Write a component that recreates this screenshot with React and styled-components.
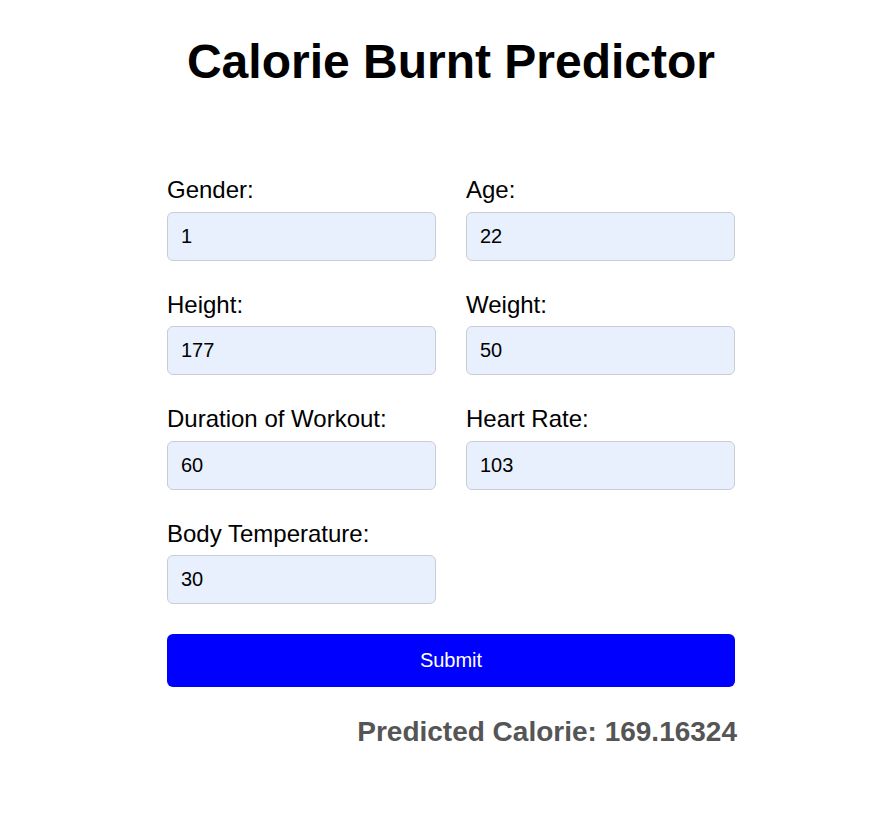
import React from 'react';
import styled, { createGlobalStyle } from 'styled-components';

const GlobalStyle = createGlobalStyle`
    body {
        margin: 0;
        background: #fff;
        font-family: "Liberation Sans", Arial, sans-serif;
        color: #000;
    }
`;

const Page = styled.div`
    width: 578px;
    margin: 0 auto;
    padding: 34px 0 40px 10px;
    box-sizing: border-box;
`;

const Title = styled.h1`
    margin: 0;
    text-align: center;
    font-size: 48px;
    font-weight: bold;
`;

const Form = styled.form`
    margin-top: 87px;
    display: grid;
    grid-template-columns: minmax(0, 1fr) minmax(0, 1fr);
    column-gap: 30px;
    row-gap: 30px;
`;

const Field = styled.div`
    display: flex;
    flex-direction: column;
    min-width: 0;
`;

const Label = styled.label`
    font-size: 24px;
    line-height: 28px;
    margin-bottom: 7.5px;
`;

const Input = styled.input`
    box-sizing: border-box;
    width: 100%;
    min-width: 0;
    height: 49px;
    padding: 0 13px;
    font-family: "Liberation Sans", Arial, sans-serif;
    font-size: 20px;
    color: #000;
    background: #e8f0fe;
    border: 1px solid #c9ccd4;
    border-radius: 6px;
    outline: none;
`;

const SubmitBtn = styled.button`
    grid-column: 1 / -1;
    height: 53px;
    background: #0000ff;
    color: #fff;
    border: none;
    border-radius: 6px;
    font-family: "Liberation Sans", Arial, sans-serif;
    font-size: 20px;
    cursor: pointer;
`;

const Result = styled.h2`
    margin: 29px -2px 0 0;
    text-align: right;
    font-size: 28px;
    font-weight: bold;
    color: #555;
`;

const fields = [
    { name: 'gender', label: 'Gender:', value: '1' },
    { name: 'age', label: 'Age:', value: '22' },
    { name: 'height', label: 'Height:', value: '177' },
    { name: 'weight', label: 'Weight:', value: '50' },
    { name: 'duration', label: 'Duration of Workout:', value: '60' },
    { name: 'heartRate', label: 'Heart Rate:', value: '103' },
    { name: 'bodyTemp', label: 'Body Temperature:', value: '30' }
];

export default () => {
    return (
        <>
            <GlobalStyle />
            <Page>
                <Title>Calorie Burnt Predictor</Title>
                <Form onSubmit={e => e.preventDefault()}>
                    {fields.map(f => (
                        <Field key={f.name}>
                            <Label htmlFor={f.name}>{f.label}</Label>
                            <Input id={f.name} name={f.name} defaultValue={f.value} />
                        </Field>
                    ))}
                    <SubmitBtn type="submit">Submit</SubmitBtn>
                </Form>
                <Result>Predicted Calorie: 169.16324</Result>
            </Page>
        </>
    );
};
